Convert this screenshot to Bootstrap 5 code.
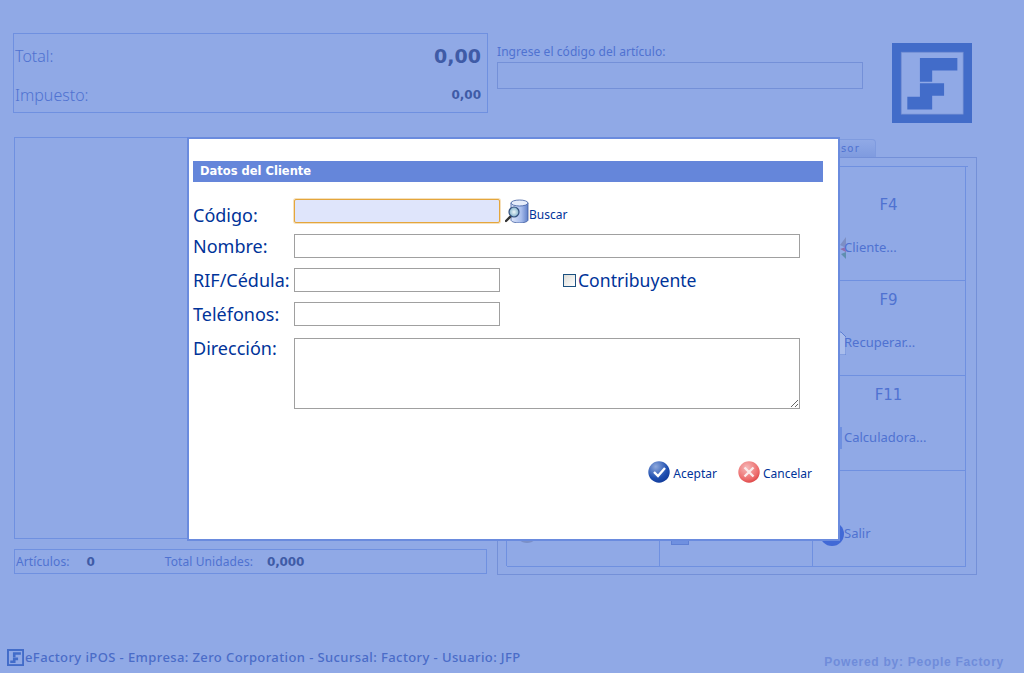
<!DOCTYPE html>
<html lang="es">
<head>
  <meta charset="UTF-8">
  <title>eFactory iPOS</title>
  <link href="https://cdn.jsdelivr.net/npm/bootstrap@5.3.0/dist/css/bootstrap.min.css" rel="stylesheet">
  <style>
    html, body { height: 673px; overflow: hidden; }
    body { background: #90a9e6; color: #4f72d1; font-family: "DejaVu Sans", Verdana, sans-serif; }
    .pos-page { position: relative; width: 1024px; height: 673px; padding-top: 33px; }
    .pos-line { border: 1px solid #6f90e0; }
    .pos-left { width: 475px; margin-left: 13px; }
    .pos-right { width: 480px; margin-left: 9px; }
    .total-box { height: 80px; padding: 0 6px 0 1px; font-family: "Noto Sans", sans-serif; font-size: 16px; font-weight: 300; }
    .total-row1 { height: 46px; padding-bottom: 2px; }
    .total-row2 { height: 30px; }
    .val-big { font-family: "DejaVu Sans", sans-serif; font-size: 19px; font-weight: 700; color: #3f5ba6; }
    .val-small { font-family: "DejaVu Sans", sans-serif; font-size: 12px; font-weight: 700; color: #3f5ba6; }
    .items-panel { height: 402px; margin: 24px 0 0 1px; }
    .items-foot { height: 25px; margin: 10px 1px 0 1px; font-size: 12px; letter-spacing: .1px; padding-left: 1px; font-family: "Noto Sans", sans-serif; }
    .foot-val { color: #3f5ba6; font-family: "DejaVu Sans", sans-serif; font-weight: 700; font-size: 12px; letter-spacing: -.2px; }
    .foot-n1 { margin: 0 70px 0 17px; }
    .foot-n2 { margin-left: 14px; }
    .code-col { width: 366px; padding-top: 11px; font-size: 12px; letter-spacing: .07px; font-family: "Noto Sans", sans-serif; }
    .code-label { height: 18px; line-height: 16px; }
    .code-box { height: 27px; border: 1px solid #7490d8; }
    .brand-logo { width: 80px; height: 80px; margin: 10px 0 0 29px; display: block; }
    .tab-strip { height: 18px; margin-top: 16px; padding-right: 101px; }
    .tab-item { height: 18px; padding: 2px 15px 0 20px; font-size: 10px; letter-spacing: 1.2px; line-height: 14px; color: #4f72d1; border: 1px solid #7f9bdf; border-bottom: 0; border-top-right-radius: 4px; background: linear-gradient(#90a9e6, #7f9bdf); }
    .keys-panel { height: 418px; padding: 8px; border: 1px solid #7490d8; }
    .keys-grid { display: grid; grid-template-columns: 153px 153px 153px; grid-template-rows: 114px 95px 95px 96px; height: 400px; border-top: 1px solid #6f90e0; border-left: 1px solid #6f90e0; }
    .key-cell { display: flex; flex-direction: column; justify-content: flex-end; padding: 0 0 20px 9px; border-right: 1px solid #6f90e0; border-bottom: 1px solid #6f90e0; }
    .key-name { text-align: center; padding-right: 10px; font-size: 15px; line-height: 20px; margin-bottom: 21px; }
    .key-action { display: flex; align-items: center; height: 24px; font-size: 13px; font-family: "Noto Sans", sans-serif; }
    .key-action svg { flex: none; margin-right: -2px; }
    .status-row { position: absolute; left: 7px; right: 20px; top: 649px; }
    .status-text { margin: -2px 0 0 1px; font-size: 13px; font-weight: 500; font-family: "Noto Sans", sans-serif; letter-spacing: .4px; line-height: 16px; color: #4a6cc8; }
    .powered { margin-top: 4px; font-family: "Liberation Sans", sans-serif; font-weight: 700; font-size: 12px; letter-spacing: .73px; color: #6f8cda; }
    .client-modal { position: absolute; left: 187px; top: 137px; width: 653px; height: 404px; padding: 22px 15px 0 4px; background: #fff; border: 2px solid #6a8bde; color: #003399; font-family: "Noto Sans", sans-serif; }
    .modal-bar { height: 21px; padding-left: 7px; background: #6586da; color: #fff; font-family: "DejaVu Sans", sans-serif; font-weight: 700; font-size: 11.5px; line-height: 21px; }
    .form-line { display: flex; align-items: center; height: 24px; margin-top: 10px; }
    .form-line-first { margin-top: 17px; margin-bottom: 11px; }
    .form-line-text { margin-top: 12px; height: 71px; align-items: flex-start; }
    .form-name { width: 101px; flex: none; font-size: 18px; line-height: 24px; white-space: nowrap; }
    .form-line-first .form-name { margin-top: 8px; }
    .form-line-text .form-name { margin-top: -2px; }
    .client-modal .form-control { height: 24px; min-height: 0; padding: 0 3px; border: 1px solid #a0a0a0; border-radius: 0; box-shadow: none; }
    .client-modal textarea.form-control { height: 71px; }
    .client-modal .form-control.field-focus { background: #dfe5fb; border-color: #e4a63c; border-radius: 2px; box-shadow: 0 0 0 1px rgba(228, 166, 60, .35); }
    .field-short { width: 206px; flex: none; }
    .client-modal .field-long { width: 506px; flex: none; }
    .search-link { font-size: 12px; margin-left: 5px; display: flex; align-items: center; }
    .search-link span { margin-top: 8px; }
    .contrib { margin-left: 63px; font-size: 17.6px; display: flex; align-items: center; }
    .contrib-box { width: 13px; height: 13px; margin-right: 2px; flex: none; border: 1px solid #1c5180; background: linear-gradient(135deg, #dcdcd7, #fff); }
    .modal-actions { margin-top: 52px; padding-right: 11px; font-size: 12px; gap: 21px; }
    .modal-act { display: flex; align-items: center; gap: 3px; }
    .modal-act span { margin-top: 4px; }
  </style>
</head>
<body>
  <div class="pos-page">
    <div class="d-flex align-items-start">
      <div class="pos-left">
        <div class="total-box pos-line">
          <div class="total-row1 d-flex justify-content-between align-items-center"><span>Total:</span><span class="val-big">0,00</span></div>
          <div class="total-row2 d-flex justify-content-between align-items-center"><span>Impuesto:</span><span class="val-small">0,00</span></div>
        </div>
        <div class="items-panel pos-line"></div>
        <div class="items-foot pos-line d-flex align-items-center">
          <span>Artículos:</span><span class="foot-val foot-n1">0</span>
          <span>Total Unidades:</span><span class="foot-val foot-n2">0,000</span>
        </div>
      </div>

      <div class="pos-right">
        <div class="d-flex align-items-start">
          <div class="code-col">
            <div class="code-label">Ingrese el código del artículo:</div>
            <div class="code-box"></div>
          </div>
          <svg class="brand-logo" viewBox="0 0 235 235">
            <rect width="235" height="235" fill="#426cc9"/>
            <rect x="27" y="27" width="182" height="182" fill="#90a9e6" stroke="#6f8cd0" stroke-width="2"/>
            <path d="M82 44H192V81H118V114H82Z" fill="#426cc9"/>
            <path d="M82 118H153V155H118V195H45V158H82Z" fill="#426cc9"/>
          </svg>
        </div>
        <div class="tab-strip d-flex justify-content-end"><div class="tab-item">Supervisor</div></div>
        <div class="keys-panel">
          <div class="keys-grid">
            <div class="key-cell"></div>
            <div class="key-cell"></div>
            <div class="key-cell">
              <div class="key-name">F4</div>
              <div class="key-action">
                <svg width="24" height="24" viewBox="0 0 24 24"><path d="M24 1l-6 8 6 3z" fill="#7d8fc4"/><path d="M24 11l-6 2 6 3z" fill="#8f6fa8"/><path d="M24 16l-5 2 5 5z" fill="#5f8fb0"/></svg>Cliente...
              </div>
            </div>
            <div class="key-cell"></div>
            <div class="key-cell"></div>
            <div class="key-cell">
              <div class="key-name">F9</div>
              <div class="key-action">
                <svg width="24" height="24" viewBox="0 0 24 24"><path d="M4 1h15l5 5v18H4z" fill="#a9bdec" stroke="#5f80d4"/></svg>Recuperar...
              </div>
            </div>
            <div class="key-cell"></div>
            <div class="key-cell"></div>
            <div class="key-cell">
              <div class="key-name">F11</div>
              <div class="key-action">
                <svg width="20" height="24" viewBox="0 0 20 24"><rect x="2" y="1" width="18" height="22" fill="#6f90e0"/></svg><span class="ms-1">Calculadora...</span>
              </div>
            </div>
            <div class="key-cell">
              <div class="key-action"><svg width="24" height="24" viewBox="0 0 24 24"><circle cx="11" cy="10" r="11" fill="#7a8fc8"/></svg></div>
            </div>
            <div class="key-cell">
              <div class="key-action"><svg width="20" height="24" viewBox="0 0 20 24"><rect x="2.500" y=".5" width="17" height="22" fill="#6f90e0" stroke="#5f80d4"/></svg></div>
            </div>
            <div class="key-cell">
              <div class="key-action"><svg width="24" height="24" viewBox="0 0 24 24"><circle cx="10" cy="12" r="12" fill="#4169d6"/></svg>Salir</div>
            </div>
          </div>
        </div>
      </div>
    </div>

    <div class="status-row d-flex justify-content-between align-items-start">
      <div class="d-flex align-items-center">
        <svg width="17" height="17" viewBox="0 0 235 235">
          <rect width="235" height="235" fill="#426cc9"/>
          <rect x="27" y="27" width="182" height="182" fill="#90a9e6"/>
          <path d="M82 44H192V81H118V114H82Z" fill="#426cc9"/>
          <path d="M82 118H153V155H118V195H45V158H82Z" fill="#426cc9"/>
        </svg>
        <span class="status-text">eFactory iPOS - Empresa: Zero Corporation - Sucursal: Factory - Usuario: JFP</span>
      </div>
      <div class="powered">Powered by: People Factory</div>
    </div>

    <div class="client-modal">
      <div class="modal-bar">Datos del Cliente</div>
      <div class="form-line form-line-first">
        <label class="form-name">Código:</label>
        <input class="form-control field-short field-focus" type="text">
        <span class="search-link">
          <svg width="24" height="24" viewBox="0 0 24 24">
            <defs>
              <linearGradient id="dbFill" x1="0" x2="1" y1="0" y2="0"><stop offset="0" stop-color="#dfe7fa"/><stop offset=".6" stop-color="#a8bdec"/><stop offset="1" stop-color="#5f7fc8"/></linearGradient>
              <radialGradient id="lensFill"><stop offset="0" stop-color="#eef7fb"/><stop offset="1" stop-color="#7fb0c8"/></radialGradient>
            </defs>
            <path d="M6 4v17c0 1.600 4 3 8.500 3S23 22.600 23 21V4z" fill="url(#dbFill)" stroke="#3c5aa0" stroke-width=".8"/>
            <ellipse cx="14.500" cy="4" rx="8.500" ry="3" fill="#e6edfb" stroke="#3c5aa0" stroke-width=".8"/>
            <path d="M1 22l5-5" stroke="#333" stroke-width="2.400" stroke-linecap="round"/>
            <circle cx="9" cy="13" r="5" fill="url(#lensFill)" stroke="#34507f" stroke-width="1.200"/>
          </svg>
          <span>Buscar</span>
        </span>
      </div>
      <div class="form-line">
        <label class="form-name">Nombre:</label>
        <input class="form-control field-long" type="text">
      </div>
      <div class="form-line">
        <label class="form-name">RIF/Cédula:</label>
        <input class="form-control field-short" type="text">
        <span class="contrib"><span class="contrib-box"></span>Contribuyente</span>
      </div>
      <div class="form-line">
        <label class="form-name">Teléfonos:</label>
        <input class="form-control field-short" type="text">
      </div>
      <div class="form-line form-line-text">
        <label class="form-name">Dirección:</label>
        <textarea class="form-control field-long"></textarea>
      </div>
      <div class="modal-actions d-flex justify-content-end">
        <span class="modal-act">
          <svg width="22" height="22" viewBox="0 0 22 22">
            <defs><radialGradient id="okFill" cx=".35" cy=".25" r=".9"><stop offset="0" stop-color="#8fa9dc"/><stop offset=".6" stop-color="#1f4fb0"/><stop offset="1" stop-color="#0c3391"/></radialGradient></defs>
            <circle cx="11" cy="11" r="10.700" fill="url(#okFill)"/>
            <path d="M6 11l4 4 7-8" fill="none" stroke="#fff" stroke-width="2.400"/>
          </svg><span>Aceptar</span>
        </span>
        <span class="modal-act">
          <svg width="22" height="22" viewBox="0 0 22 22">
            <defs><radialGradient id="noFill" cx=".4" cy=".3" r=".85"><stop offset="0" stop-color="#f6b9b9"/><stop offset=".65" stop-color="#ec6a6a"/><stop offset="1" stop-color="#d22c2c"/></radialGradient></defs>
            <circle cx="11" cy="11" r="10.700" fill="url(#noFill)"/>
            <path d="M6.500 6.500l9 9M15.500 6.500l-9 9" stroke="#fbeaea" stroke-width="2.400"/>
          </svg><span>Cancelar</span>
        </span>
      </div>
    </div>
  </div>
  <script src="https://cdn.jsdelivr.net/npm/bootstrap@5.3.0/dist/js/bootstrap.bundle.min.js"></script>
</body>
</html>
